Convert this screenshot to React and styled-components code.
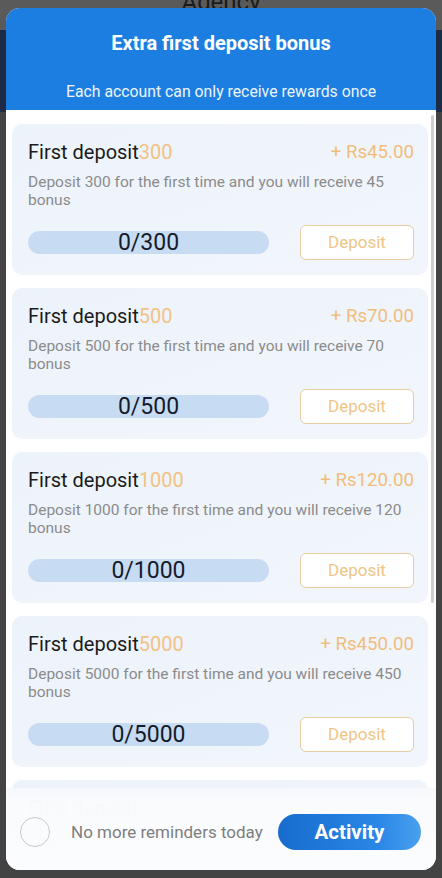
import React from 'react'
import styled, { createGlobalStyle } from 'styled-components'

const GlobalStyle = createGlobalStyle`
  html, body {
    margin: 0;
    padding: 0;
  }
  body {
    font-family: Roboto, 'Noto Sans', sans-serif;
    background: #424242;
  }
`

const deposits = [
  { amount: 300, bonus: '45.00', reward: 45 },
  { amount: 500, bonus: '70.00', reward: 70 },
  { amount: 1000, bonus: '120.00', reward: 120 },
  { amount: 5000, bonus: '450.00', reward: 450 },
  { amount: 10000, bonus: '900.00', reward: 900 },
]

const Page = styled.div`
  position: relative;
  width: 442px;
  height: 878px;
  overflow: hidden;
  background: #404040;
`

const Backdrop = styled.div`
  position: absolute;
  inset: 0;
  display: flex;
  flex-direction: column;
`

const BackTop = styled.div`
  height: 30px;
  background: #5a5a5a;
  display: flex;
  justify-content: center;
  align-items: flex-start;
  font-size: 24px;
  line-height: 24px;
  color: #1a1a1a;
  overflow: hidden;
`

const BackTopText = styled.span`
  margin-top: -10px;
`

const BackBand = styled.div`
  height: 82px;
  background: #1d2b47;
`

const BackRest = styled.div`
  flex: 1;
  background: #434343;
`

const Modal = styled.div`
  position: absolute;
  top: 8px;
  left: 6px;
  width: 430px;
  height: 862px;
  border-radius: 14px;
  overflow: hidden;
  background: #ffffff;
  display: flex;
  flex-direction: column;
`

const Header = styled.header`
  height: 102px;
  flex-shrink: 0;
  background: #1c7ee0;
  color: #ffffff;
  display: flex;
  flex-direction: column;
  align-items: center;
  box-sizing: border-box;
  padding-top: 22px;
`

const Title = styled.h2`
  margin: 0;
  font-size: 20px;
  font-weight: 700;
  line-height: 26px;
`

const Subtitle = styled.p`
  margin: 26px 0 0;
  font-size: 15.8px;
  line-height: 20px;
  color: #eef5ff;
`

const Body = styled.div`
  position: relative;
  flex: 1;
  overflow: hidden;
  display: flex;
  flex-direction: column;
  gap: 13px;
  padding: 14px 8px 0 6px;
`

const ScrollThumb = styled.div`
  position: absolute;
  top: 5px;
  right: 2px;
  width: 3px;
  height: 488px;
  border-radius: 2px;
  background: #cfcfcf;
`

const Card = styled.div`
  flex-shrink: 0;
  border-radius: 10px;
  background: linear-gradient(160deg, #edf3fb 0%, #f2f6fc 100%);
  padding: 15px 14px 15px 16px;
  display: flex;
  flex-direction: column;
`

const TitleRow = styled.div`
  display: flex;
  justify-content: space-between;
  align-items: center;
  height: 26px;
`

const CardTitle = styled.span`
  font-size: 20px;
  color: #1b1b1b;
`

const Highlight = styled.span`
  color: #f3c183;
`

const Bonus = styled.span`
  font-size: 18.7px;
  color: #f2bd7c;
`

const Desc = styled.p`
  margin: 8px 0 0;
  font-size: 15.5px;
  line-height: 18px;
  color: #8b8b8b;
  padding-right: 6px;
`

const ActionRow = styled.div`
  display: flex;
  justify-content: space-between;
  align-items: center;
  margin-top: 15px;
  height: 36px;
`

const Progress = styled.div`
  width: 241px;
  height: 23px;
  border-radius: 12px;
  background: #c7dcf3;
  display: flex;
  justify-content: center;
  align-items: center;
  font-size: 23px;
  color: #141b2b;
`

const DepositButton = styled.button`
  width: 114px;
  height: 35px;
  border-radius: 6px;
  border: 1px solid #e6cda3;
  background: #ffffff;
  color: #efc587;
  font-family: inherit;
  font-size: 17px;
  padding: 0;
`

const Footer = styled.div`
  position: absolute;
  left: 0;
  right: 0;
  bottom: 0;
  height: 82px;
  background: linear-gradient(
    180deg,
    rgba(246, 248, 252, 0.85) 0%,
    rgba(250, 251, 253, 0.99) 16%,
    #fbfcfe 100%
  );
  display: flex;
  align-items: center;
  padding: 6px 15px 0 14px;
  box-sizing: border-box;
`

const Check = styled.span`
  width: 30px;
  height: 30px;
  border-radius: 50%;
  border: 1px solid #c9c9c9;
  box-sizing: border-box;
  flex-shrink: 0;
`

const FooterText = styled.span`
  margin-left: 21px;
  font-size: 17px;
  color: #7e7e7e;
  flex: 1;
`

const ActivityButton = styled.button`
  width: 143px;
  height: 36px;
  border: none;
  border-radius: 18px;
  background: linear-gradient(90deg, #176ccd 0%, #2a87e6 70%, #4aa0ee 100%);
  color: #ffffff;
  font-family: inherit;
  font-size: 20.5px;
  font-weight: 700;
  padding: 0;
`

const DepositCard = ({ amount, bonus, reward }) => (
  <Card>
    <TitleRow>
      <CardTitle>
        First deposit<Highlight>{amount}</Highlight>
      </CardTitle>
      <Bonus>+ Rs{bonus}</Bonus>
    </TitleRow>
    <Desc>
      Deposit {amount} for the first time and you will receive {reward} bonus
    </Desc>
    <ActionRow>
      <Progress>0/{amount}</Progress>
      <DepositButton>Deposit</DepositButton>
    </ActionRow>
  </Card>
)

export default function App() {
  return (
    <Page>
      <GlobalStyle />
      <Backdrop>
        <BackTop>
          <BackTopText>Agency</BackTopText>
        </BackTop>
        <BackBand />
        <BackRest />
      </Backdrop>
      <Modal>
        <Header>
          <Title>Extra first deposit bonus</Title>
          <Subtitle>Each account can only receive rewards once</Subtitle>
        </Header>
        <Body>
          {deposits.map((d) => (
            <DepositCard key={d.amount} {...d} />
          ))}
          <ScrollThumb />
          <Footer>
            <Check />
            <FooterText>No more reminders today</FooterText>
            <ActivityButton>Activity</ActivityButton>
          </Footer>
        </Body>
      </Modal>
    </Page>
  )
}
